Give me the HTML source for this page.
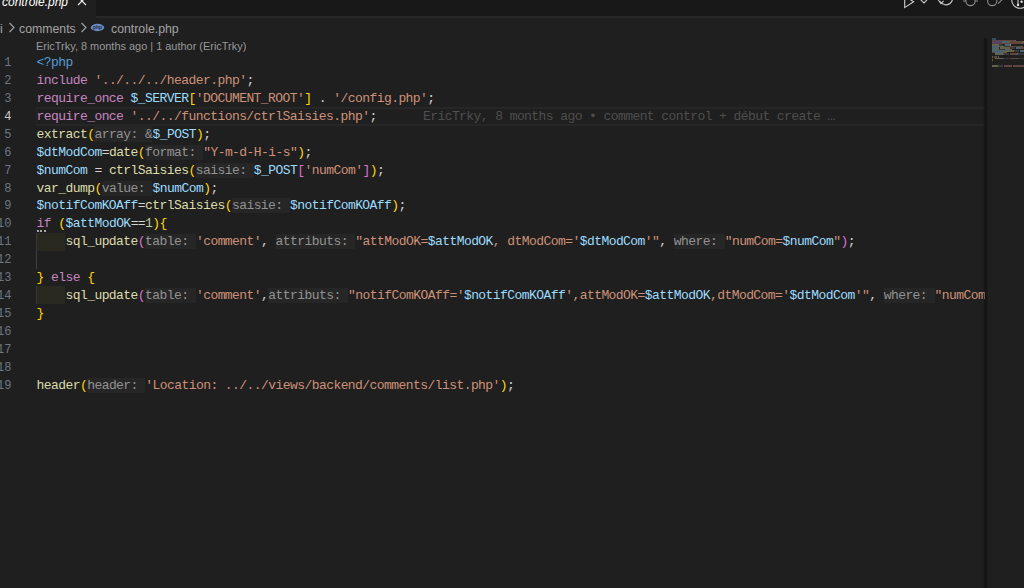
<!DOCTYPE html>
<html><head><meta charset="utf-8">
<style>
*{margin:0;padding:0;box-sizing:border-box}
html,body{width:1024px;height:588px;overflow:hidden;background:#1f1f1f}
body{position:relative;font-family:"Liberation Sans",sans-serif}
#tabbar{position:absolute;left:0;top:0;width:1024px;height:18px;background:#181818;border-bottom:2px solid #282828}
#tab{position:absolute;left:0;top:0;width:96px;height:18px;background:#1f1f1f}
#tab .lbl{position:absolute;left:2px;top:-6.5px;font-size:12px;font-style:italic;color:#ffffff;line-height:16px}
#crumbs{position:absolute;left:0;top:21px;height:17px;font-size:12.3px;line-height:17px;color:#a3a3a3;white-space:nowrap}
#crumbs span{position:absolute;top:0}
#lens{position:absolute;left:36px;top:39px;font-size:10.95px;line-height:14px;color:#999999;white-space:nowrap}
.ln{position:absolute;left:-28.6px;width:40px;text-align:right;font-family:"Liberation Mono",monospace;font-size:12px;line-height:18px;color:#6e7681}
.ln.cur{color:#cccccc}
.code{position:absolute;left:36.5px;height:18px;font-family:"Liberation Mono",monospace;font-size:13px;letter-spacing:-0.565px;line-height:18px;color:#cccccc;white-space:pre;transform:translateY(1.2px)}
.k{color:#c586c0}.s{color:#ce9178}.v{color:#9cdcfe}.f{color:#dcdcaa}.t{color:#569cd6}.n{color:#b5cea8}.o{color:#d4d4d4}
.b1{color:#ffd700}.b2{color:#da70d6}.b3{color:#179fff}
.h{color:#929292;display:inline-block;padding-right:0.2px;height:18px;vertical-align:top;background:linear-gradient(to bottom,transparent 0.3px,#262626 0.3px,#262626 16px,transparent 16px)}
#curline{position:absolute;left:36px;top:106.5px;width:949px;height:19px;border-top:2px solid #262626;border-bottom:2px solid #262626;border-left:1px solid #262626}
#blame{position:absolute;left:423px;top:108px;height:18px;font-family:"Liberation Mono",monospace;font-size:13px;letter-spacing:-0.58px;line-height:18px;color:#4e4e4e;white-space:pre}
.ind{position:absolute;left:36px;width:29px;height:18px;background:#2a2920;border-left:1px solid #3a3a30}
.guide{position:absolute;left:36px;width:1px;background:#404040}
.dots{position:absolute;top:230px;width:2px;height:2px;background:#a8a8a8}
#mmshadow{position:absolute;left:982.5px;top:37.5px;width:5.5px;height:551px;background:linear-gradient(to right,rgba(0,0,0,0),rgba(0,0,0,0.45) 55%,rgba(0,0,0,0.1) 90%,rgba(0,0,0,0))}
#minimap{position:absolute;left:992px;top:0;width:32px;height:588px;overflow:hidden}
#minimap i{position:absolute;height:1.5px;opacity:0.36;background:currentColor}
#editor{position:absolute;left:0;top:0;width:985px;height:588px;overflow:hidden}
#icons{position:absolute;left:0;top:0;width:1024px;height:17px}
</style></head><body>
<div id="tabbar"></div>
<div id="tab"><span class="lbl">controle.php</span>
<svg style="position:absolute;left:77px;top:-4px" width="10" height="10" viewBox="0 0 10 10"><path d="M1 1 L9 9 M9 1 L1 9" stroke="#e8e8e8" stroke-width="1.2"/></svg>
</div>
<svg id="icons" width="1024" height="17" viewBox="0 0 1024 17" fill="none" stroke-width="1.1">
<path d="M904.7 -4.5 L904.7 7.6 L913.6 1.8 L909 -1.2" stroke="#cfcfcf"/>
<path d="M920.6 -0.3 L924 3 L927.2 -0.3" stroke="#cfcfcf"/>
<path d="M940.2 1.5 A6.6 6.6 0 1 0 939.6 -3.5" stroke="#cfcfcf"/>
<path d="M938.3 0 L941 3.6 L943.5 0.8" stroke="#cfcfcf"/>
<circle cx="970.5" cy="1" r="4.6" stroke="#8c8c8c"/>
<path d="M963 1 L965.9 1 M975.1 1 L978 1" stroke="#8c8c8c"/>
<circle cx="992.2" cy="1" r="4.6" stroke="#8c8c8c"/>
<path d="M998 3.6 L1002.3 -0.5" stroke="#8c8c8c"/>
<circle cx="1020" cy="0" r="8.3" stroke="#cfcfcf"/>
<path d="M1018 -3 L1018 4.6" stroke="#cfcfcf"/>
<circle cx="1018" cy="5" r="1.2" fill="#e0e0e0" stroke="none"/>
<circle cx="1021.6" cy="1.8" r="1.2" fill="#e0e0e0" stroke="none"/>
</svg>
<div id="crumbs">
<span style="left:0">i</span>
<svg style="position:absolute;left:8px;top:0.5px" width="8" height="11" viewBox="0 0 8 11"><path d="M1.5 1 L6 5.5 L1.5 10" fill="none" stroke="#a3a3a3" stroke-width="1.1"/></svg>
<span style="left:19px">comments</span>
<svg style="position:absolute;left:79.5px;top:0.5px" width="8" height="11" viewBox="0 0 8 11"><path d="M1.5 1 L6 5.5 L1.5 10" fill="none" stroke="#a3a3a3" stroke-width="1.1"/></svg>
<svg style="position:absolute;left:90px;top:2.3px" width="15" height="9" viewBox="0 0 15 9"><ellipse cx="7.5" cy="4.5" rx="6.7" ry="3.7" fill="#6a8cc4"/><text x="7.5" y="6.3" font-size="5" font-family="Liberation Sans" text-anchor="middle" fill="#1f2a40" font-weight="bold">php</text></svg>
<span style="left:111px">controle.php</span>
</div>
<div id="lens">EricTrky, 8 months ago | 1 author (EricTrky)</div>

<div id="editor">
<div id="curline"></div>
<div class="ind" style="top:233px"></div>
<div class="ind" style="top:286px"></div>
<div class="guide" style="top:250.5px;height:18px"></div>
<div class="dots" style="left:36.5px"></div>
<div class="dots" style="left:40.3px"></div>
<div class="dots" style="left:44px"></div>
<div class="ln" style="top:54.00px">1</div>
<div class="ln" style="top:71.93px">2</div>
<div class="ln" style="top:89.86px">3</div>
<div class="ln cur" style="top:107.79px">4</div>
<div class="ln" style="top:125.72px">5</div>
<div class="ln" style="top:143.65px">6</div>
<div class="ln" style="top:161.58px">7</div>
<div class="ln" style="top:179.51px">8</div>
<div class="ln" style="top:197.44px">9</div>
<div class="ln" style="top:215.37px">10</div>
<div class="ln" style="top:233.30px">11</div>
<div class="ln" style="top:251.23px">12</div>
<div class="ln" style="top:269.16px">13</div>
<div class="ln" style="top:287.09px">14</div>
<div class="ln" style="top:305.02px">15</div>
<div class="ln" style="top:322.95px">16</div>
<div class="ln" style="top:340.88px">17</div>
<div class="ln" style="top:358.81px">18</div>
<div class="ln" style="top:376.74px">19</div>
<div class="code" style="top:53.00px"><span class="t">&lt;?php</span></div>
<div class="code" style="top:70.93px"><span class="k">include</span><span class="o"> </span><span class="s">'../../../header.php'</span><span class="o">;</span></div>
<div class="code" style="top:88.86px"><span class="k">require_once</span><span class="o"> </span><span class="v">$_SERVER</span><span class="b1">[</span><span class="s">'DOCUMENT_ROOT'</span><span class="b1">]</span><span class="o"> . </span><span class="s">'/config.php'</span><span class="o">;</span></div>
<div class="code" style="top:106.79px"><span class="k">require_once</span><span class="o"> </span><span class="s">'../../functions/ctrlSaisies.php'</span><span class="o">;</span></div>
<div class="code" style="top:124.72px"><span class="f">extract</span><span class="b1">(</span><span class="h">array: &amp;</span><span class="v">$_POST</span><span class="b1">)</span><span class="o">;</span></div>
<div class="code" style="top:142.65px"><span class="v">$dtModCom</span><span class="o">=</span><span class="f">date</span><span class="b1">(</span><span class="h">format: </span><span class="s">"Y-m-d-H-i-s"</span><span class="b1">)</span><span class="o">;</span></div>
<div class="code" style="top:160.58px"><span class="v">$numCom</span><span class="o"> = </span><span class="f">ctrlSaisies</span><span class="b1">(</span><span class="h">saisie: </span><span class="v">$_POST</span><span class="b2">[</span><span class="s">'numCom'</span><span class="b2">]</span><span class="b1">)</span><span class="o">;</span></div>
<div class="code" style="top:178.51px"><span class="f">var_dump</span><span class="b1">(</span><span class="h">value: </span><span class="v">$numCom</span><span class="b1">)</span><span class="o">;</span></div>
<div class="code" style="top:196.44px"><span class="v">$notifComKOAff</span><span class="o">=</span><span class="f">ctrlSaisies</span><span class="b1">(</span><span class="h">saisie: </span><span class="v">$notifComKOAff</span><span class="b1">)</span><span class="o">;</span></div>
<div class="code" style="top:214.37px"><span class="k">if</span><span class="o"> </span><span class="b1">(</span><span class="v">$attModOK</span><span class="o">==</span><span class="n">1</span><span class="b1">)</span><span class="b1">{</span></div>
<div class="code" style="top:232.30px"><span class="o">    </span><span class="f">sql_update</span><span class="b2">(</span><span class="h">table: </span><span class="s">'comment'</span><span class="o">, </span><span class="h">attributs: </span><span class="s">"attModOK=</span><span class="v">$attModOK</span><span class="s">, dtModCom='</span><span class="v">$dtModCom</span><span class="s">'"</span><span class="o">, </span><span class="h">where: </span><span class="s">"numCom=</span><span class="v">$numCom</span><span class="s">"</span><span class="b2">)</span><span class="o">;</span></div>
<div class="code" style="top:268.16px"><span class="b1">}</span><span class="o"> </span><span class="k">else</span><span class="o"> </span><span class="b1">{</span></div>
<div class="code" style="top:286.09px"><span class="o">    </span><span class="f">sql_update</span><span class="b2">(</span><span class="h">table: </span><span class="s">'comment'</span><span class="o">,</span><span class="h">attributs: </span><span class="s">"notifComKOAff='</span><span class="v">$notifComKOAff</span><span class="s">',attModOK=</span><span class="v">$attModOK</span><span class="s">,dtModCom='</span><span class="v">$dtModCom</span><span class="s">'"</span><span class="o">, </span><span class="h">where: </span><span class="s">"numCom=$numCom"</span><span class="b2">)</span><span class="o">;</span></div>
<div class="code" style="top:304.02px"><span class="b1">}</span></div>
<div class="code" style="top:375.74px"><span class="f">header</span><span class="b1">(</span><span class="h">header: </span><span class="s">'Location: ../../views/backend/comments/list.php'</span><span class="b1">)</span><span class="o">;</span></div>
<div id="blame">EricTrky, 8 months ago • comment control + début create …</div>
</div>

<div id="mmshadow"></div>
<div id="minimap">
<i style="left:0.00px;top:38.30px;width:4.00px;color:#569cd6"></i>
<i style="left:0.00px;top:39.80px;width:5.60px;color:#c586c0"></i>
<i style="left:6.40px;top:39.80px;width:16.80px;color:#ce9178"></i>
<i style="left:23.20px;top:39.80px;width:0.80px;color:#d4d4d4"></i>
<i style="left:0.00px;top:41.30px;width:9.60px;color:#c586c0"></i>
<i style="left:10.40px;top:41.30px;width:6.40px;color:#9cdcfe"></i>
<i style="left:16.80px;top:41.30px;width:0.80px;color:#ffd700"></i>
<i style="left:17.60px;top:41.30px;width:12.00px;color:#ce9178"></i>
<i style="left:29.60px;top:41.30px;width:0.80px;color:#ffd700"></i>
<i style="left:31.20px;top:41.30px;width:0.80px;color:#d4d4d4"></i>
<i style="left:32.80px;top:41.30px;width:10.40px;color:#ce9178"></i>
<i style="left:43.20px;top:41.30px;width:0.80px;color:#d4d4d4"></i>
<i style="left:0.00px;top:42.80px;width:9.60px;color:#c586c0"></i>
<i style="left:10.40px;top:42.80px;width:26.40px;color:#ce9178"></i>
<i style="left:36.80px;top:42.80px;width:0.80px;color:#d4d4d4"></i>
<i style="left:0.00px;top:44.30px;width:5.60px;color:#dcdcaa"></i>
<i style="left:5.60px;top:44.30px;width:0.80px;color:#ffd700"></i>
<i style="left:6.40px;top:44.30px;width:4.80px;color:#6a6a6a"></i>
<i style="left:12.00px;top:44.30px;width:0.80px;color:#6a6a6a"></i>
<i style="left:12.80px;top:44.30px;width:4.80px;color:#9cdcfe"></i>
<i style="left:17.60px;top:44.30px;width:0.80px;color:#ffd700"></i>
<i style="left:18.40px;top:44.30px;width:0.80px;color:#d4d4d4"></i>
<i style="left:0.00px;top:45.80px;width:7.20px;color:#9cdcfe"></i>
<i style="left:7.20px;top:45.80px;width:0.80px;color:#d4d4d4"></i>
<i style="left:8.00px;top:45.80px;width:3.20px;color:#dcdcaa"></i>
<i style="left:11.20px;top:45.80px;width:0.80px;color:#ffd700"></i>
<i style="left:12.00px;top:45.80px;width:5.60px;color:#6a6a6a"></i>
<i style="left:18.40px;top:45.80px;width:10.40px;color:#ce9178"></i>
<i style="left:28.80px;top:45.80px;width:0.80px;color:#ffd700"></i>
<i style="left:29.60px;top:45.80px;width:0.80px;color:#d4d4d4"></i>
<i style="left:0.00px;top:47.30px;width:5.60px;color:#9cdcfe"></i>
<i style="left:6.40px;top:47.30px;width:0.80px;color:#d4d4d4"></i>
<i style="left:8.00px;top:47.30px;width:8.80px;color:#dcdcaa"></i>
<i style="left:16.80px;top:47.30px;width:0.80px;color:#ffd700"></i>
<i style="left:17.60px;top:47.30px;width:5.60px;color:#6a6a6a"></i>
<i style="left:24.00px;top:47.30px;width:4.80px;color:#9cdcfe"></i>
<i style="left:28.80px;top:47.30px;width:0.80px;color:#da70d6"></i>
<i style="left:29.60px;top:47.30px;width:6.40px;color:#ce9178"></i>
<i style="left:36.00px;top:47.30px;width:0.80px;color:#da70d6"></i>
<i style="left:36.80px;top:47.30px;width:0.80px;color:#ffd700"></i>
<i style="left:37.60px;top:47.30px;width:0.80px;color:#d4d4d4"></i>
<i style="left:0.00px;top:48.80px;width:6.40px;color:#dcdcaa"></i>
<i style="left:6.40px;top:48.80px;width:0.80px;color:#ffd700"></i>
<i style="left:7.20px;top:48.80px;width:4.80px;color:#6a6a6a"></i>
<i style="left:12.80px;top:48.80px;width:5.60px;color:#9cdcfe"></i>
<i style="left:18.40px;top:48.80px;width:0.80px;color:#ffd700"></i>
<i style="left:19.20px;top:48.80px;width:0.80px;color:#d4d4d4"></i>
<i style="left:0.00px;top:50.30px;width:11.20px;color:#9cdcfe"></i>
<i style="left:11.20px;top:50.30px;width:0.80px;color:#d4d4d4"></i>
<i style="left:12.00px;top:50.30px;width:8.80px;color:#dcdcaa"></i>
<i style="left:20.80px;top:50.30px;width:0.80px;color:#ffd700"></i>
<i style="left:21.60px;top:50.30px;width:5.60px;color:#6a6a6a"></i>
<i style="left:28.00px;top:50.30px;width:11.20px;color:#9cdcfe"></i>
<i style="left:39.20px;top:50.30px;width:0.80px;color:#ffd700"></i>
<i style="left:40.00px;top:50.30px;width:0.80px;color:#d4d4d4"></i>
<i style="left:0.00px;top:51.80px;width:1.60px;color:#c586c0"></i>
<i style="left:2.40px;top:51.80px;width:0.80px;color:#ffd700"></i>
<i style="left:3.20px;top:51.80px;width:7.20px;color:#9cdcfe"></i>
<i style="left:10.40px;top:51.80px;width:1.60px;color:#d4d4d4"></i>
<i style="left:12.00px;top:51.80px;width:0.80px;color:#b5cea8"></i>
<i style="left:12.80px;top:51.80px;width:0.80px;color:#ffd700"></i>
<i style="left:13.60px;top:51.80px;width:0.80px;color:#ffd700"></i>
<i style="left:3.20px;top:53.30px;width:8.00px;color:#dcdcaa"></i>
<i style="left:11.20px;top:53.30px;width:0.80px;color:#da70d6"></i>
<i style="left:12.00px;top:53.30px;width:4.80px;color:#6a6a6a"></i>
<i style="left:17.60px;top:53.30px;width:7.20px;color:#ce9178"></i>
<i style="left:24.80px;top:53.30px;width:0.80px;color:#d4d4d4"></i>
<i style="left:26.40px;top:53.30px;width:8.00px;color:#6a6a6a"></i>
<i style="left:35.20px;top:53.30px;width:8.00px;color:#ce9178"></i>
<i style="left:43.20px;top:53.30px;width:7.20px;color:#9cdcfe"></i>
<i style="left:50.40px;top:53.30px;width:0.80px;color:#ce9178"></i>
<i style="left:52.00px;top:53.30px;width:8.00px;color:#ce9178"></i>
<i style="left:60.00px;top:53.30px;width:7.20px;color:#9cdcfe"></i>
<i style="left:67.20px;top:53.30px;width:1.60px;color:#ce9178"></i>
<i style="left:68.80px;top:53.30px;width:0.80px;color:#d4d4d4"></i>
<i style="left:70.40px;top:53.30px;width:4.80px;color:#6a6a6a"></i>
<i style="left:76.00px;top:53.30px;width:6.40px;color:#ce9178"></i>
<i style="left:82.40px;top:53.30px;width:5.60px;color:#9cdcfe"></i>
<i style="left:88.00px;top:53.30px;width:0.80px;color:#ce9178"></i>
<i style="left:88.80px;top:53.30px;width:0.80px;color:#da70d6"></i>
<i style="left:89.60px;top:53.30px;width:0.80px;color:#d4d4d4"></i>
<i style="left:0.00px;top:56.30px;width:0.80px;color:#ffd700"></i>
<i style="left:1.60px;top:56.30px;width:3.20px;color:#c586c0"></i>
<i style="left:5.60px;top:56.30px;width:0.80px;color:#ffd700"></i>
<i style="left:3.20px;top:57.80px;width:8.00px;color:#dcdcaa"></i>
<i style="left:11.20px;top:57.80px;width:0.80px;color:#da70d6"></i>
<i style="left:12.00px;top:57.80px;width:4.80px;color:#6a6a6a"></i>
<i style="left:17.60px;top:57.80px;width:7.20px;color:#ce9178"></i>
<i style="left:24.80px;top:57.80px;width:0.80px;color:#d4d4d4"></i>
<i style="left:25.60px;top:57.80px;width:8.00px;color:#6a6a6a"></i>
<i style="left:34.40px;top:57.80px;width:12.80px;color:#ce9178"></i>
<i style="left:47.20px;top:57.80px;width:11.20px;color:#9cdcfe"></i>
<i style="left:58.40px;top:57.80px;width:8.80px;color:#ce9178"></i>
<i style="left:67.20px;top:57.80px;width:7.20px;color:#9cdcfe"></i>
<i style="left:74.40px;top:57.80px;width:8.80px;color:#ce9178"></i>
<i style="left:83.20px;top:57.80px;width:7.20px;color:#9cdcfe"></i>
<i style="left:90.40px;top:57.80px;width:1.60px;color:#ce9178"></i>
<i style="left:92.00px;top:57.80px;width:0.80px;color:#d4d4d4"></i>
<i style="left:93.60px;top:57.80px;width:4.80px;color:#6a6a6a"></i>
<i style="left:99.20px;top:57.80px;width:12.80px;color:#ce9178"></i>
<i style="left:112.00px;top:57.80px;width:0.80px;color:#da70d6"></i>
<i style="left:112.80px;top:57.80px;width:0.80px;color:#d4d4d4"></i>
<i style="left:0.00px;top:59.30px;width:0.80px;color:#ffd700"></i>
<i style="left:0.00px;top:65.30px;width:4.80px;color:#dcdcaa"></i>
<i style="left:4.80px;top:65.30px;width:0.80px;color:#ffd700"></i>
<i style="left:5.60px;top:65.30px;width:5.60px;color:#6a6a6a"></i>
<i style="left:12.00px;top:65.30px;width:8.00px;color:#ce9178"></i>
<i style="left:20.80px;top:65.30px;width:30.40px;color:#ce9178"></i>
<i style="left:51.20px;top:65.30px;width:0.80px;color:#ffd700"></i>
<i style="left:52.00px;top:65.30px;width:0.80px;color:#d4d4d4"></i>
</div>
</body></html>
